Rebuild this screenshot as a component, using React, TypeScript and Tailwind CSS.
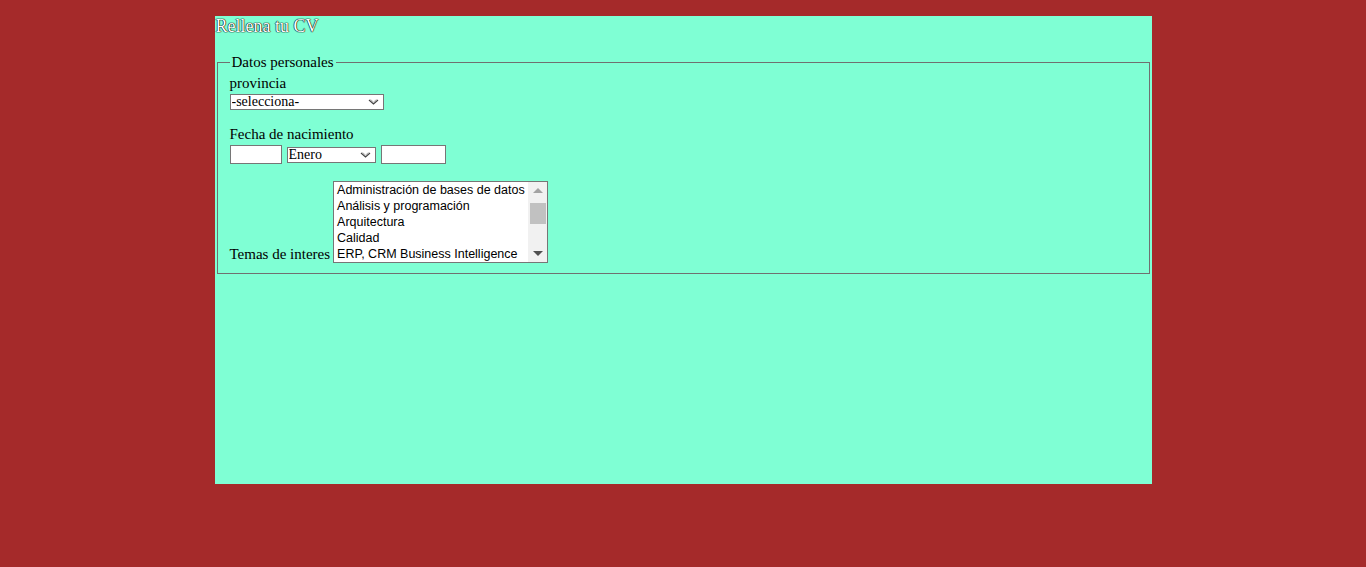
function Chevron() {
    return (
        <svg width="11" height="7" viewBox="0 0 11 7" className="pointer-events-none absolute right-[5px] top-1/2 -translate-y-1/2" fill="none">
            <path d="M1 1.5 L5.5 5.5 L10 1.5" stroke="#444" strokeWidth="1.2" />
            <path d="M2.5 1 L5.5 3.6 L8.5 1" stroke="#999" strokeWidth="0.8" />
        </svg>
    );
}

function Dropdown({ width, value, options }: { width: string; value: string; options: string[] }) {
    return (
        <div className={`relative h-4 ${width}`}>
            <select defaultValue={value} className="block h-4 w-full appearance-none border border-[#767676] bg-white pl-px text-[14px] leading-[14px]">
                {options.map((o) => (
                    <option key={o}>{o}</option>
                ))}
            </select>
            <Chevron />
        </div>
    );
}

export default function App() {
    const temas = ["Administración de bases de datos", "Análisis y programación", "Arquitectura", "Calidad", "ERP, CRM Business Intelligence"];
    const meses = ["Enero", "Febrero", "Marzo", "Abril", "Mayo", "Junio", "Julio", "Agosto", "Septiembre", "Octubre", "Noviembre", "Diciembre"];

    return (
        <div className="h-[567px] w-full bg-[#a52a2a] pt-4 font-['Liberation_Serif',serif] text-black">
            <div className="mx-auto flex h-[468px] w-[937px] flex-col bg-[#7fffd4]">
                <div className="pl-px text-[18px] leading-[21px] text-white [text-shadow:0_0_1px_#000,0_0_1px_#000,0_0_1px_#000]">Rellena tu CV</div>

                <fieldset className="mx-[2px] mt-4 border border-[#707070] px-3 pb-[10px] pt-[4px]">
                    <legend className="px-0.5 text-[15px] leading-[18px]">Datos personales</legend>

                    <div className="text-[15px] leading-[17px]">provincia</div>
                    <div className="mt-[2px]">
                        <Dropdown width="w-[154px]" value="-selecciona-" options={["-selecciona-", "Madrid", "Barcelona", "Valencia"]} />
                    </div>

                    <div className="mt-4 text-[15px] leading-[17px]">Fecha de nacimiento</div>
                    <div className="mt-[2px] flex items-center gap-[5px]">
                        <input type="text" className="h-[19px] w-[52px] border border-[#767676] bg-white" />
                        <Dropdown width="w-[89px]" value="Enero" options={meses} />
                        <input type="text" className="h-[19px] w-[65px] border border-[#767676] bg-white" />
                    </div>

                    <div className="mt-[17px] flex items-end gap-[3px]">
                        <label className="text-[15px] leading-[17px]">Temas de interes</label>
                        <div className="flex h-[82px] w-[215px] border border-[#767676] bg-white">
                            <div className="flex-1 overflow-hidden pl-[3px] font-['Liberation_Sans',Arial,sans-serif] text-[12.5px] leading-[16px]">
                                {temas.map((t) => (
                                    <div key={t} className="whitespace-nowrap">
                                        {t}
                                    </div>
                                ))}
                            </div>
                            <div className="flex w-[19px] flex-col items-center bg-[#f1f1f1]">
                                <div className="flex h-[17px] items-center justify-center">
                                    <div className="h-0 w-0 border-x-[5px] border-b-[5px] border-x-transparent border-b-[#a3a3a3]" />
                                </div>
                                <div className="mt-[4px] h-[21px] w-[16px] bg-[#c1c1c1]" />
                                <div className="flex-1" />
                                <div className="flex h-[17px] items-center justify-center">
                                    <div className="h-0 w-0 border-x-[5px] border-t-[5px] border-x-transparent border-t-[#505050]" />
                                </div>
                            </div>
                        </div>
                    </div>
                </fieldset>
            </div>
        </div>
    );
}
